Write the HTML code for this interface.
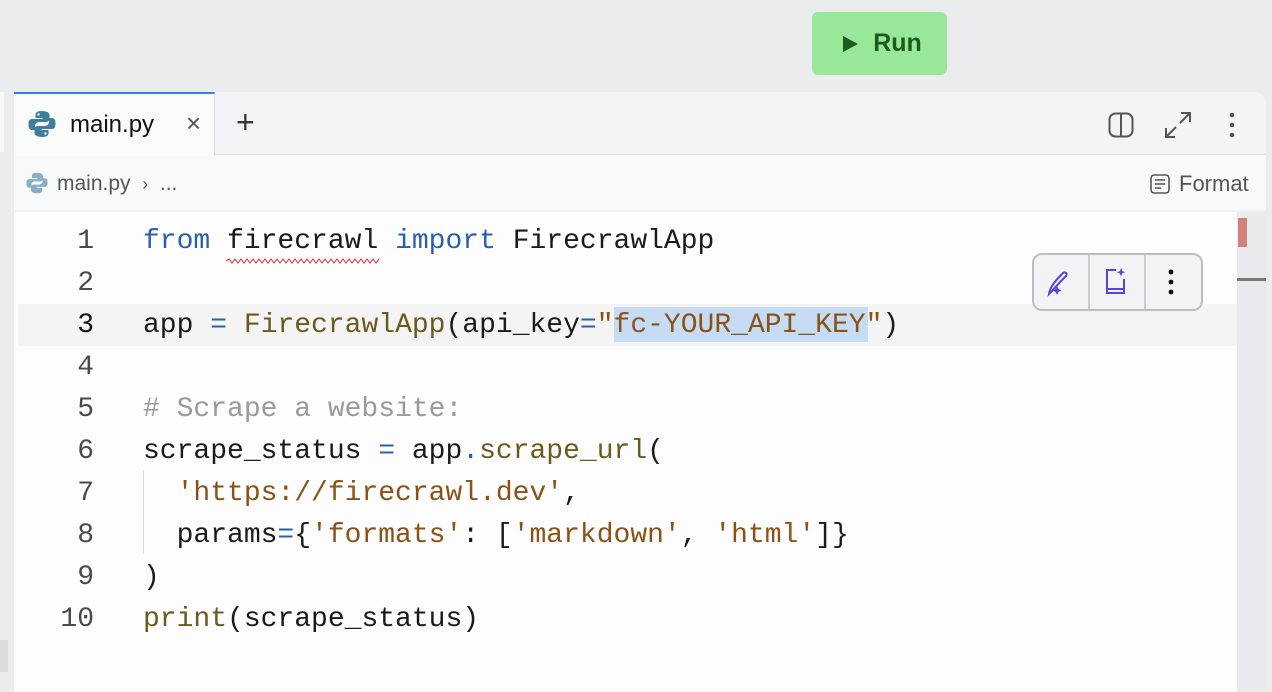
<!DOCTYPE html>
<html><head><meta charset="utf-8"><style>
*{margin:0;padding:0;box-sizing:border-box}
body{width:1272px;height:672px;background:#ebecee;position:relative;overflow:hidden;font-family:"Liberation Sans",sans-serif}
.run{position:absolute;left:812px;top:12px;width:135px;height:63px;background:#99e899;border-radius:6px;color:#1d5a1d;font-size:25px;font-weight:bold;display:flex;align-items:center;justify-content:center;gap:14px;padding-left:4px}
.panel{position:absolute;left:14px;top:92px;width:1252px;height:600px;background:#fdfdfd;border-top-right-radius:12px;overflow:hidden}
.tabbar{position:absolute;left:0;top:0;width:100%;height:63px;background:#f3f4f5;border-bottom:1px solid #ddd}
.tab{position:absolute;left:0;top:0;width:201px;height:64px;background:#fafbfb;border-top:2px solid #3b7ddd;border-right:1px solid #ddd}
.crumb{position:absolute;left:0;top:64px;width:100%;height:56px;background:#f8f9fa;border-bottom:2px solid #f0f1f2}
.code{position:absolute;left:0;top:120px;width:1223px;height:480px;background:#fdfdfd}
.sb{position:absolute;left:1223px;top:120px;width:29px;height:480px;background:#e9eaeb}
.mono{font-family:"Liberation Mono",monospace;font-size:28px;}
.ln{position:absolute;left:40px;width:40px;text-align:right;color:#4a4a4a;}
.l{position:absolute;left:129px;white-space:pre;color:#1a1a1a}
.k{color:#2a5fb0}.f{color:#6b5a1e}.s{color:#8b5218}.c{color:#9a9a9a}.o{color:#2a5fb0}
</style></head><body>
<div style="position:absolute;left:0;top:92px;width:4px;height:60px;background:#f7f7f8"></div>
<div style="position:absolute;left:0;top:640px;width:8px;height:32px;background:#dadbdd"></div>
<div class="run"><svg width="18" height="18" viewBox="0 0 18 18"><path d="M2 1L17 9L2 17Z" fill="#1d5a1d"/></svg>Run</div>
<div class="panel">
 <div class="tabbar"></div>
 <div class="tab">
  <svg style="position:absolute;left:14px;top:16px" width="28" height="28" viewBox="0 0 28 28"><path d="M13.5 1c-5 0-6 2-6 4v3h7v1H4c-2.5 0-3.5 2-3.5 5.5S1.5 20 4 20h3v-4c0-2.5 2-4 4-4h7c2 0 3.5-1.5 3.5-3.5V5c0-2-2-4-8-4z" fill="#3e7fa0"/><path d="M14.5 27c5 0 6-2 6-4v-3h-7v-1H24c2.5 0 3.5-2 3.5-5.5S26.5 8 24 8h-3v4c0 2.5-2 4-4 4h-7c-2 0-3.5 1.5-3.5 3.5V23c0 2 2 4 8 4z" fill="#3e7fa0"/><circle cx="10.5" cy="4.5" r="1.2" fill="#fff"/><circle cx="17.5" cy="23.5" r="1.2" fill="#fff"/></svg>
  <div style="position:absolute;left:56px;top:17px;font-size:24px;color:#111">main.py</div>
  <div style="position:absolute;left:172px;top:14px;font-size:26px;color:#555">×</div>
 </div>
 <div style="position:absolute;left:222px;top:12px;font-size:32px;color:#333;font-weight:300">+</div>
 <svg style="position:absolute;left:1094px;top:20px" width="26" height="26" viewBox="0 0 26 26"><rect x="1.5" y="1.5" width="23" height="23" rx="6" fill="none" stroke="#555" stroke-width="2"/><line x1="13" y1="2" x2="13" y2="24" stroke="#555" stroke-width="2"/></svg>
 <svg style="position:absolute;left:1150px;top:19px" width="28" height="28" viewBox="0 0 28 28"><path d="M17 2h9v9M26 2L16 12M11 26H2v-9M2 26l10-10" fill="none" stroke="#555" stroke-width="2"/></svg>
 <svg style="position:absolute;left:1214px;top:20px" width="8" height="26" viewBox="0 0 8 26"><circle cx="4" cy="3" r="2.3" fill="#555"/><circle cx="4" cy="13" r="2.3" fill="#555"/><circle cx="4" cy="23" r="2.3" fill="#555"/></svg>
 <div class="crumb">
  <svg style="position:absolute;left:12px;top:16px;opacity:.6" width="22" height="22" viewBox="0 0 28 28"><path d="M13.5 1c-5 0-6 2-6 4v3h7v1H4c-2.5 0-3.5 2-3.5 5.5S1.5 20 4 20h3v-4c0-2.5 2-4 4-4h7c2 0 3.5-1.5 3.5-3.5V5c0-2-2-4-8-4z" fill="#3e7fa0"/><path d="M14.5 27c5 0 6-2 6-4v-3h-7v-1H24c2.5 0 3.5-2 3.5-5.5S26.5 8 24 8h-3v4c0 2.5-2 4-4 4h-7c-2 0-3.5 1.5-3.5 3.5V23c0 2 2 4 8 4z" fill="#3e7fa0"/></svg>
  <div style="position:absolute;left:43px;top:16px;font-size:21px;color:#555">main.py &nbsp;<span style="font-size:18px">›</span>&nbsp; ...</div>
  <svg style="position:absolute;left:1136px;top:18px" width="20" height="20" viewBox="0 0 20 20"><rect x="1" y="1" width="18" height="18" rx="3" fill="none" stroke="#555" stroke-width="1.6"/><path d="M5 6h10M5 10h10M5 14h6" stroke="#555" stroke-width="1.6"/></svg>
  <div style="position:absolute;left:1165px;top:15px;font-size:22px;color:#555">Format</div>
 </div>
 <div class="code mono">
  <div style="position:absolute;left:4px;top:92px;width:1219px;height:42px;background:#f4f4f5"></div>
  <div style="position:absolute;left:600px;top:95px;width:254px;height:35px;background:#c6dcf4"></div>
  <div style="position:absolute;left:129px;top:258px;width:1px;height:84px;background:#ddd"></div>
  <svg style="position:absolute;left:212px;top:46px" width="154" height="6" viewBox="0 0 154 6"><path d="M0 3 l3 -2 l3 4 l3 -4 l3 4 l3 -4 l3 4 l3 -4 l3 4 l3 -4 l3 4 l3 -4 l3 4 l3 -4 l3 4 l3 -4 l3 4 l3 -4 l3 4 l3 -4 l3 4 l3 -4 l3 4 l3 -4 l3 4 l3 -4 l3 4 l3 -4 l3 4 l3 -4 l3 4 l3 -4 l3 4 l3 -4 l3 4 l3 -4 l3 4 l3 -4 l3 4 l3 -4 l3 4 l3 -4 l3 4 l3 -4 l3 4 l3 -4 l3 4 l3 -4 l3 4 l3 -4 l3 4 l3 -4" fill="none" stroke="#d33" stroke-width="1"/></svg>
  <div class="ln" style="top:14px">1</div><div class="l" style="top:14px"><span class="k">from</span> firecrawl <span class="k">import</span> FirecrawlApp</div>
  <div class="ln" style="top:56px">2</div>
  <div class="ln" style="top:98px;color:#111">3</div><div class="l" style="top:98px">app <span class="o">=</span> <span class="f">FirecrawlApp</span>(api_key<span class="o">=</span><span class="s">"fc-YOUR_API_KEY"</span>)</div>
  <div class="ln" style="top:140px">4</div>
  <div class="ln" style="top:182px">5</div><div class="l c" style="top:182px"># Scrape a website:</div>
  <div class="ln" style="top:224px">6</div><div class="l" style="top:224px">scrape_status <span class="o">=</span> app<span class="o">.</span><span class="f">scrape_url</span>(</div>
  <div class="ln" style="top:266px">7</div><div class="l" style="top:266px">  <span class="s">'https://firecrawl.dev'</span>,</div>
  <div class="ln" style="top:308px">8</div><div class="l" style="top:308px">  params<span class="o">=</span>{<span class="s">'formats'</span>: [<span class="s">'markdown'</span>, <span class="s">'html'</span>]}</div>
  <div class="ln" style="top:350px">9</div><div class="l" style="top:350px">)</div>
  <div class="ln" style="top:392px">10</div><div class="l" style="top:392px"><span class="f">print</span>(scrape_status)</div>
  <div style="position:absolute;left:1018px;top:41px;width:171px;height:58px;background:#f3f3f5;border:2px solid #bdbdbd;border-radius:10px">
   <div style="position:absolute;left:54px;top:0;width:2px;height:54px;background:#ccc"></div>
   <div style="position:absolute;left:110px;top:0;width:2px;height:54px;background:#ccc"></div>
   <svg style="position:absolute;left:12px;top:14px" width="28" height="28" viewBox="0 0 28 28"><path d="M3 25c1-6 4-11 14-21 2-2 5 1 3 3C10 17 8 20 3 25z" fill="none" stroke="#5a45d6" stroke-width="2"/><path d="M11 17l1.5 3 3 1.5-3 1.5L11 26l-1.5-3-3-1.5 3-1.5z" fill="#5a45d6"/></svg>
   <svg style="position:absolute;left:70px;top:12px" width="24" height="30" viewBox="0 0 24 30"><path d="M12 3H3v23h17v-4H3M20 12v14" fill="none" stroke="#5a45d6" stroke-width="2"/><path d="M17 1l1.2 3 3 1.2-3 1.2L17 9.5l-1.2-3-3-1.2 3-1.2z" fill="#5a45d6"/></svg>
   <svg style="position:absolute;left:134px;top:14px" width="6" height="26" viewBox="0 0 6 26"><circle cx="3" cy="3" r="2.4" fill="#111"/><circle cx="3" cy="13" r="2.4" fill="#111"/><circle cx="3" cy="23" r="2.4" fill="#111"/></svg>
  </div>
 </div>
 <div class="sb">
  <div style="position:absolute;left:1px;top:6px;width:9px;height:29px;background:#d4807a"></div>
  <div style="position:absolute;left:0;top:66px;width:29px;height:3px;background:#777"></div>
 </div>
</div>
</body></html>
